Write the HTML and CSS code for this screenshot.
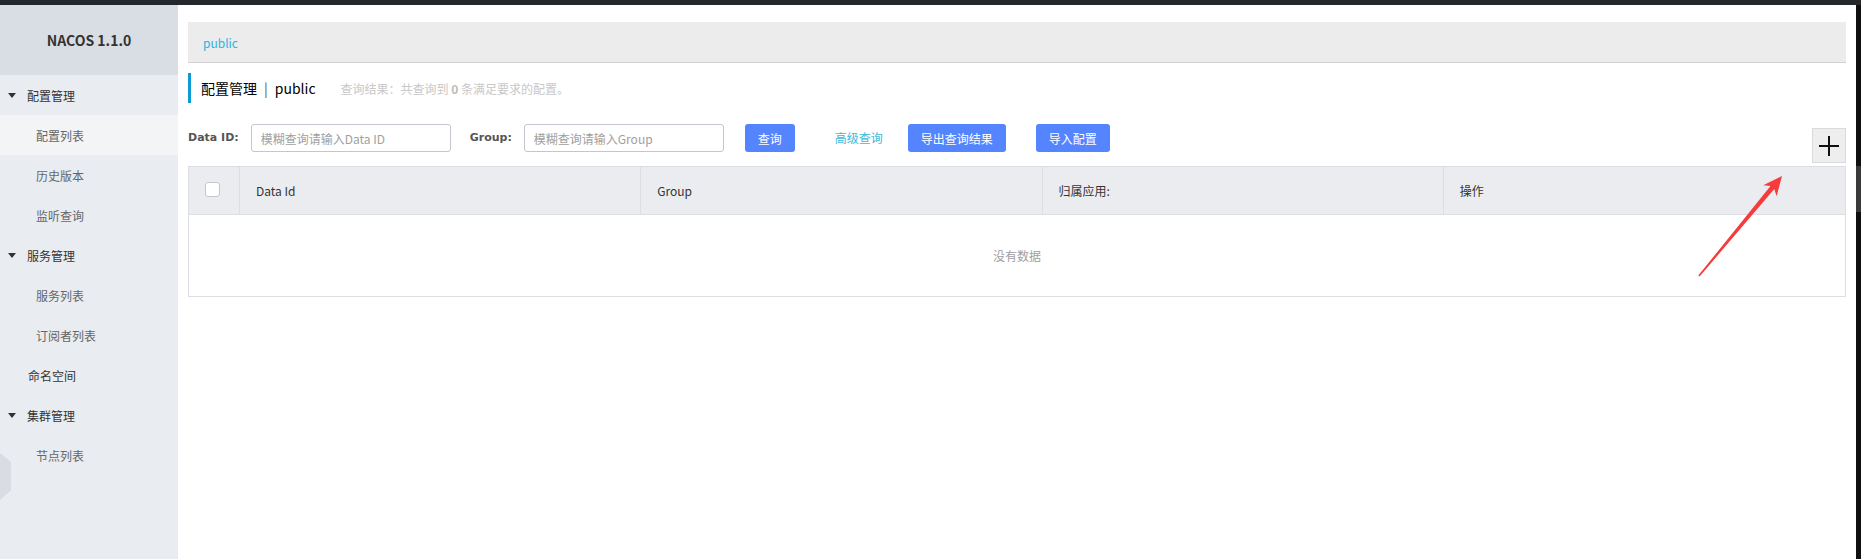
FILE: index.html
```html
<!DOCTYPE html>
<html lang="zh-CN">
<head>
<meta charset="utf-8">
<title>NACOS</title>
<link rel="stylesheet" href="styles.css">
</head>
<body>
<div class="app">
  <aside class="sidebar">
    <div class="brand">NACOS 1.1.0</div>
    <ul class="menu">
      <li class="group"><span class="caret"></span>配置管理</li>
      <li class="sub active">配置列表</li>
      <li class="sub">历史版本</li>
      <li class="sub">监听查询</li>
      <li class="group"><span class="caret"></span>服务管理</li>
      <li class="sub">服务列表</li>
      <li class="sub">订阅者列表</li>
      <li class="group plain">命名空间</li>
      <li class="group"><span class="caret"></span>集群管理</li>
      <li class="sub">节点列表</li>
    </ul>
    <div class="hex"></div>
  </aside>
  <main class="main">
    <div class="crumb"><span class="crumb-link">public</span></div>
    <div class="title">
      <span class="title-main">配置管理</span><span class="title-sep">|</span><span class="title-ns">public</span>
      <span class="title-info">查询结果：共查询到 <b>0</b> 条满足要求的配置。</span>
    </div>
    <div class="search">
      <label class="lbl">Data ID:</label>
      <input class="ipt" type="text" placeholder="模糊查询请输入Data ID">
      <label class="lbl lbl-group">Group:</label>
      <input class="ipt" type="text" placeholder="模糊查询请输入Group">
      <button class="btn btn-query">查询</button>
      <span class="link">高级查询</span>
      <button class="btn btn-export">导出查询结果</button>
      <button class="btn btn-import">导入配置</button>
      <button class="add" aria-label="add">
        <svg width="20" height="20" viewBox="0 0 20 20"><path d="M10 0V20M0 10H20" stroke="#111" stroke-width="2"/></svg>
      </button>
    </div>
    <div class="table">
      <div class="th th-check"><span class="checkbox"></span></div>
      <div class="th">Data Id</div>
      <div class="th">Group</div>
      <div class="th">归属应用:</div>
      <div class="th last">操作</div>
      <div class="empty">没有数据</div>
    </div>
  </main>
  <div class="edge"><div class="thumb"></div></div>
</div>
<svg class="arrow" width="1861" height="559" viewBox="0 0 1861 559">
  <polygon points="1698.3,275.6 1699.6,276.5 1774.3,189.1 1776.6,196.2 1782,176 1763.3,185.2 1770.5,185.9" fill="#f53b3b"/>
</svg>
</body>
</html>
```
FILE: styles.css
```css
* { box-sizing: border-box; }
html, body { margin: 0; padding: 0; }
body {
  font-family: "Noto Sans CJK SC", "Noto Sans", sans-serif;
  font-size: 12px;
  color: #333;
  background: #fff;
  width: 1861px;
  height: 559px;
  overflow: hidden;
  position: relative;
}
.app {
  display: flex;
  height: 559px;
  border-top: 5px solid #24282c;
}
.sidebar {
  width: 178px;
  flex: none;
  background: #e9ecf0;
  position: relative;
}
.brand {
  height: 70px;
  background: #d9dde4;
  display: flex;
  align-items: center;
  justify-content: center;
  font-weight: bold;
  font-size: 14px;
  color: #333;
}
.menu { list-style: none; margin: 0; padding: 0; }
.menu li {
  height: 40px;
  display: flex;
  align-items: center;
  font-size: 12px;
}
.group { padding-left: 8px; color: #333; }
.group.plain { padding-left: 28px; }
.caret {
  width: 0; height: 0;
  border-left: 4.5px solid transparent;
  border-right: 4.5px solid transparent;
  border-top: 5px solid #333;
  margin-right: 11px;
}
.sub { padding-left: 36px; color: #666; }
.sub.active { background: #f3f4f6; }
.hex {
  position: absolute;
  left: 0;
  top: 448px;
  width: 11px;
  height: 47px;
  background: #d9dde3;
  clip-path: polygon(0 0, 100% 19%, 100% 79%, 0 100%);
}
.main {
  flex: 1;
  padding: 17px 10px 0 10px;
  min-width: 0;
}
.crumb {
  height: 41px;
  background: #ececec;
  border-bottom: 1px solid #d2d2d2;
  padding-left: 15px;
  display: flex;
  align-items: center;
}
.crumb-link { color: #2bb3e0; font-size: 12px; }
.title {
  margin-top: 10px;
  height: 30px;
  border-left: 3px solid #0e9ad4;
  padding-left: 10px;
  display: flex;
  align-items: center;
  font-size: 14px;
  color: #000;
}
.title-sep { margin: 0 7px; color: #555; }
.title-info { margin-left: 25px; font-size: 12px; color: #c8c8c8; }
.title-info b { color: #bbb; }
.search {
  margin-top: 21px;
  display: flex;
  align-items: flex-start;
}
.lbl {
  height: 28px;
  line-height: 28px;
  font-weight: bold;
  color: #555;
  margin-right: 12px;
  font-family: "DejaVu Sans", sans-serif;
  font-size: 11px;
}
.lbl-group { margin-left: 19px; }
.ipt {
  width: 200px;
  height: 28px;
  border: 1px solid #c4c6cf;
  border-radius: 3px;
  padding: 0 9px;
  font-family: inherit;
  font-size: 12px;
  color: #333;
  outline: none;
}
.ipt::placeholder { color: #a0a0a0; }
.btn {
  height: 28px;
  padding: 0 13px;
  border: none;
  border-radius: 3px;
  background: #5584ff;
  color: #fff;
  font-family: inherit;
  font-size: 12px;
}
.btn-query { margin-left: 21px; }
.link {
  margin-left: 40px;
  height: 28px;
  line-height: 28px;
  color: #3ab9dc;
}
.btn-export { margin-left: 25px; }
.btn-import { margin-left: 30px; }
.add {
  margin-left: auto;
  margin-top: 4px;
  width: 34px;
  height: 35px;
  border: 1px solid #dadada;
  background: #eeeeee;
  padding: 0;
  display: flex;
  align-items: center;
  justify-content: center;
}
.table {
  margin-top: 3px;
  display: grid;
  grid-template-columns: 51px repeat(4, 1fr);
  border: 1px solid #dcdee3;
}
.th {
  height: 48px;
  background: #ebecf0;
  border-right: 1px solid #dcdee3;
  border-bottom: 1px solid #dcdee3;
  display: flex;
  align-items: center;
  padding-left: 16px;
  font-size: 12px;
  color: #333;
}
.th.last { border-right: none; }
.th-check { padding-left: 16px; }
.checkbox {
  width: 15px;
  height: 15px;
  border: 1px solid #c4c6cf;
  border-radius: 3px;
  background: #fff;
  margin-top: -3px;
}
.empty {
  grid-column: 1 / -1;
  height: 81px;
  display: flex;
  align-items: center;
  justify-content: center;
  color: #a0a0a0;
  font-size: 12px;
}
.edge {
  width: 5px;
  flex: none;
  background: #101010;
  position: relative;
}
.thumb {
  position: absolute;
  top: 161px;
  left: 0;
  width: 5px;
  height: 46px;
  background: #3a3a3a;
}
.arrow {
  position: absolute;
  left: 0;
  top: 0;
  pointer-events: none;
}
```
